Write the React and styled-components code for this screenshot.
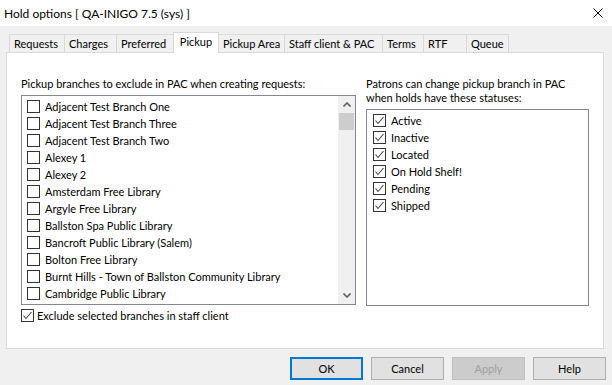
import styled, { createGlobalStyle } from "styled-components";

const GlobalStyle = createGlobalStyle`
  html, body {
    margin: 0;
    padding: 0;
    background: #f0f0f0;
  }
  body {
    font-family: Lato, "Liberation Sans", sans-serif;
    font-size: 11px;
    color: #000;
  }
  * {
    box-sizing: border-box;
  }
`;

const Window = styled.div`
  width: 612px;
  height: 385px;
  background: #f0f0f0;
  display: flex;
  flex-direction: column;
  overflow: hidden;
`;

const TitleBar = styled.div`
  height: 26px;
  background: #fff;
  display: flex;
  align-items: center;
  justify-content: space-between;
  padding: 0 9px 0 4px;
  font-size: 12px;
`;

const TabRow = styled.div`
  height: 20px;
  margin-top: 6px;
  padding-left: 9px;
  display: flex;
  align-items: flex-end;
`;

const Tab = styled.div`
  position: relative;
  width: ${(p) => p.$w + 1}px;
  height: ${(p) => (p.$active ? 21 : 18)}px;
  margin-right: -1px;
  margin-bottom: ${(p) => (p.$active ? -1 : 0)}px;
  z-index: ${(p) => (p.$active ? 1 : 0)};
  background: ${(p) => (p.$active ? "#fff" : "#f0f0f0")};
  border: 1px solid #d9d9d9;
  border-bottom: none;
  display: flex;
  align-items: center;
  justify-content: ${(p) => (p.$active ? "center" : "flex-start")};
  padding: ${(p) => (p.$active ? "0 0 3px" : "0 0 0 4px")};
  white-space: nowrap;
`;

const Panel = styled.div`
  height: 297px;
  margin: 0 8px 0 6px;
  border: 1px solid #d9d9d9;
  background: #fff;
  padding: 24px 0 0 14px;
  display: flex;
  gap: 10px;
`;

const Column = styled.div`
  width: ${(p) => p.$w}px;
  display: flex;
  flex-direction: column;
`;

const Label = styled.div`
  line-height: 14px;
  margin-bottom: 4px;
  white-space: nowrap;
`;

const ListBox = styled.div`
  height: ${(p) => p.$h}px;
  border: 1px solid #828790;
  background: #fff;
  display: flex;
`;

const Items = styled.div`
  flex: 1;
  padding: 2px 0 0 ${(p) => p.$pad}px;
  overflow: hidden;
`;

const Item = styled.div`
  height: 17px;
  display: flex;
  align-items: center;
  gap: 5px;
  white-space: nowrap;
`;

const Box = styled.span`
  width: 13px;
  height: 13px;
  flex: none;
  border: 1px solid #333;
  background: #fff;
  display: flex;
  align-items: center;
  justify-content: center;
`;

const ScrollBar = styled.div`
  width: 17px;
  background: #f0f0f0;
  display: flex;
  flex-direction: column;
`;

const ArrowButton = styled.div`
  height: 17px;
  display: flex;
  align-items: center;
  justify-content: center;
`;

const Thumb = styled.div`
  height: 17px;
  margin: 0 1px;
  background: #cdcdcd;
`;

const Track = styled.div`
  flex: 1;
`;

const OptionRow = styled.label`
  margin-top: 4px;
  display: flex;
  align-items: center;
  gap: 3px;
  white-space: nowrap;
`;

const Footer = styled.div`
  display: flex;
  justify-content: flex-end;
  gap: 8px;
  padding: 8px 6px 0 0;
`;

const Button = styled.button`
  all: unset;
  box-sizing: border-box;
  width: 73px;
  height: 23px;
  text-align: center;
  font-family: Lato, "Liberation Sans", sans-serif;
  font-size: 11px;
  background: ${(p) => (p.disabled ? "#cccccc" : "#e1e1e1")};
  color: ${(p) => (p.disabled ? "#a0a0a0" : "#000")};
  border: ${(p) => (p.$primary ? "2px solid #0078d7" : p.disabled ? "1px solid #bfbfbf" : "1px solid #adadad")};
`;

const Check = () => (
  <svg width="11" height="11" viewBox="0 0 11 11">
    <polyline points="1.5,5.5 4,8.5 9.5,2" fill="none" stroke="#444" strokeWidth="1.1" />
  </svg>
);

const Chevron = ({ down }) => (
  <svg width="8" height="5" viewBox="0 0 8 5">
    <polyline
      points={down ? "0.5,0.5 4,4 7.5,0.5" : "0.5,4.5 4,1 7.5,4.5"}
      fill="none"
      stroke="#606060"
      strokeWidth="1.6"
    />
  </svg>
);

const tabs = [
  ["Requests", 55],
  ["Charges", 52],
  ["Preferred", 57],
  ["Pickup", 45],
  ["Pickup Area", 66],
  ["Staff client & PAC", 98],
  ["Terms", 41],
  ["RTF", 43],
  ["Queue", 42],
];

const branches = [
  "Adjacent Test Branch One",
  "Adjacent Test Branch Three",
  "Adjacent Test Branch Two",
  "Alexey 1",
  "Alexey 2",
  "Amsterdam Free Library",
  "Argyle Free Library",
  "Ballston Spa Public Library",
  "Bancroft Public Library (Salem)",
  "Bolton Free Library",
  "Burnt Hills - Town of Ballston Community Library",
  "Cambridge Public Library",
];

const statuses = ["Active", "Inactive", "Located", "On Hold Shelf!", "Pending", "Shipped"];

const App = () => {
  return (
    <Window>
      <GlobalStyle />
      <TitleBar>
        Hold options [ QA-INIGO 7.5 (sys) ]
        <svg width="10" height="10" viewBox="0 0 10 10">
          <path d="M0.5 0.5 L9.5 9.5 M9.5 0.5 L0.5 9.5" stroke="#000" strokeWidth="1" />
        </svg>
      </TitleBar>
      <TabRow>
        {tabs.map(([name, w]) => (
          <Tab key={name} $w={w} $active={name === "Pickup"}>
            {name}
          </Tab>
        ))}
      </TabRow>
      <Panel>
        <Column $w={335}>
          <Label>Pickup branches to exclude in PAC when creating requests:</Label>
          <ListBox $h={210}>
            <Items $pad={5}>
              {branches.map((b) => (
                <Item key={b}>
                  <Box />
                  {b}
                </Item>
              ))}
            </Items>
            <ScrollBar>
              <ArrowButton>
                <Chevron />
              </ArrowButton>
              <Thumb />
              <Track />
              <ArrowButton>
                <Chevron down />
              </ArrowButton>
            </ScrollBar>
          </ListBox>
          <OptionRow>
            <Box>
              <Check />
            </Box>
            Exclude selected branches in staff client
          </OptionRow>
        </Column>
        <Column $w={223}>
          <Label>
            Patrons can change pickup branch in PAC
            <br />
            when holds have these statuses:
          </Label>
          <ListBox $h={197}>
            <Items $pad={6}>
              {statuses.map((s) => (
                <Item key={s}>
                  <Box>
                    <Check />
                  </Box>
                  {s}
                </Item>
              ))}
            </Items>
          </ListBox>
        </Column>
      </Panel>
      <Footer>
        <Button $primary>OK</Button>
        <Button>Cancel</Button>
        <Button disabled>Apply</Button>
        <Button>Help</Button>
      </Footer>
    </Window>
  );
};

export default App;
